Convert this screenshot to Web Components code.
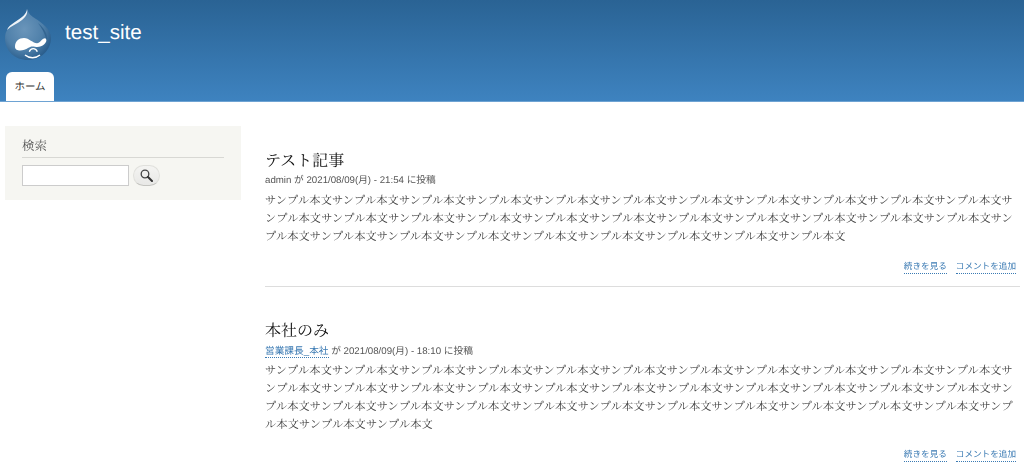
<!DOCTYPE html>
<html lang="ja">
<head>
<meta charset="utf-8">
<title>test_site</title>
<style>
  html, body { margin: 0; padding: 0; background: #fff; }
  body {
    font-family: "Liberation Serif", "Noto Serif CJK JP", "Noto Sans CJK JP", serif;
    color: #3b3b3b;
    overflow: hidden;
    height: 475px;
    text-rendering: geometricPrecision;
  }
  #content-row { display: flex; padding: 24px 4px 0 5px; gap: 24px; will-change: transform; }
  #main-col { flex: 1; min-width: 0; padding-top: 25px; }
</style>
</head>
<body>
<site-header name="test_site"><nav-tab>ホーム</nav-tab></site-header>
<div id="content-row">
  <search-block title-text="検索"></search-block>
  <div id="main-col">
    <article-teaser heading="テスト記事" author="admin" date="2021/08/09(月) - 21:54" repeat="31"></article-teaser>
    <article-teaser heading="本社のみ" author="営業課長_本社" author-link date="2021/08/09(月) - 18:10" repeat="36" last></article-teaser>
  </div>
</div>

<script>
const sansStack = `"Liberation Sans", "Noto Sans CJK JP", sans-serif`

const headerTemplate = document.createElement('template');
headerTemplate.innerHTML = `
  <style>
    :host {
      display: block;
      height: 102px;
      background: linear-gradient(#2a6394, #3e83c0);
      box-shadow: inset 0 -1px 0 #6ea3d3;
    }
    #branding {
      display: flex;
      align-items: flex-start;
      height: 72px;
      padding-left: 4px;
      box-sizing: border-box;
    }
    svg { width: 48px; height: 54px; margin-top: 8px; flex: none; }
    #name {
      font: 20.600px/1 ${sansStack};
      color: #fff;
      margin: 23px 0 0 13px;
    }
    #tabs { display: flex; padding-left: 6px; }
  </style>
  <div id="branding">
    <svg viewBox="0 0 48 54">
      <defs>
        <radialGradient id="drop" cx="0.42" cy="0.4" r="0.62">
          <stop offset="0" stop-color="#6a95ba"/>
          <stop offset="0.65" stop-color="#4f80aa"/>
          <stop offset="1" stop-color="#2b5f8e"/>
        </radialGradient>
      </defs>
      <path d="M23 1 C23 7 17 10 11 14 C5 18 1 23 1 30 C1 43 11 52 24 52 C37 52 47 42 47 30 C47 21 38 15 32 11 C27 8 24 5 23 1Z" fill="url(#drop)"/>
      <path d="M23 1 C23 6 17 10 11 14 C7 16.500 4 19 3 22 C7 18 13 16 18 12 C22 9 24 5 23 1Z" fill="#eef3f7"/>
      <path d="M34 15 C40 20 44 26 43 33 C41 26 38 20 34 15Z" fill="#336591"/>
      <path d="M11 38.700 C11 33 15 30 20 30 C25 30 29 35.300 33 35.300 C36 35.300 38 30.300 41 30.300 C43 31 43 34 40 36.500 C38 38.500 34 39.500 31 38.700 C28 38 26 38.500 24 40 C20 43 11 44 11 38.700Z" fill="#fff"/>
      <path d="M25.300 43.700 C26.500 39.500 32 39.500 33.300 43.700" fill="none" stroke="#fff" stroke-width="1.300"/>
      <path d="M21 47 C25 50.500 32 50.500 36 47" fill="none" stroke="#fff" stroke-width="1.500"/>
    </svg>
    <div id="name"></div>
  </div>
  <div id="tabs"><slot></slot></div>
`;

class SiteHeader extends HTMLElement {
  constructor() {
    super();
    this.attachShadow({ mode: 'open' });
    this.shadowRoot.appendChild(headerTemplate.content.cloneNode(true));
    this.shadowRoot.getElementById("name").textContent = this.getAttribute("name")
  }
}

const tabTemplate = document.createElement('template');
tabTemplate.innerHTML = `
  <style>
    :host {
      display: block;
      width: 48px;
      height: 29px;
      background: #fff;
      border-radius: 6px 6px 0 0;
      font: 10.500px/30px ${sansStack};
      color: #333;
      text-align: center;
    }
  </style>
  <slot></slot>
`;

class NavTab extends HTMLElement {
  constructor() {
    super();
    this.attachShadow({ mode: 'open' });
    this.shadowRoot.appendChild(tabTemplate.content.cloneNode(true));
  }
}

const searchTemplate = document.createElement('template');
searchTemplate.innerHTML = `
  <style>
    :host {
      display: block;
      flex: none;
      width: 236px;
      height: 74px;
      box-sizing: border-box;
      padding: 11px 17px 0;
      background: #f6f6f2;
    }
    h2 {
      margin: 0;
      height: 20px;
      font-weight: normal;
      font-size: 12.500px;
      line-height: 18px;
      color: #555;
      border-bottom: 1px solid #d8d8d4;
    }
    form { display: flex; align-items: center; gap: 4px; margin-top: 7px; }
    input {
      width: 107px;
      height: 21px;
      box-sizing: border-box;
      margin: 0;
      border: 1px solid #ccc;
      background: #fff;
      padding: 0;
    }
    button {
      width: 27px;
      height: 21px;
      margin: 0;
      padding: 0;
      border: 1px solid #e0e0dc;
      border-bottom-color: #c4c4c0;
      border-radius: 11px;
      background: linear-gradient(#f4f4f2, #e8e8e6);
      display: flex;
      align-items: center;
      justify-content: center;
    }
    svg { width: 13px; height: 13px; }
  </style>
  <h2></h2>
  <form>
    <input type="text">
    <button type="button" aria-label="検索">
      <svg viewBox="0 0 13 13">
        <circle cx="5" cy="5" r="3.800" fill="none" stroke="#444" stroke-width="1.300"/>
        <path d="M8 8 L12 12" stroke="#333" stroke-width="2" stroke-linecap="round"/>
      </svg>
    </button>
  </form>
`;

class SearchBlock extends HTMLElement {
  constructor() {
    super();
    this.attachShadow({ mode: 'open' });
    this.shadowRoot.appendChild(searchTemplate.content.cloneNode(true));
    this.shadowRoot.querySelector("h2").textContent = this.getAttribute("title-text")
  }
}

const articleTemplate = document.createElement('template');
articleTemplate.innerHTML = `
  <style>
    :host {
      display: block;
      padding-bottom: 12px;
      margin-bottom: 34px;
      border-bottom: 1px solid #ddd;
    }
    :host([last]) { border-bottom: none; margin-bottom: 0; }
    h2 {
      margin: 0;
      font-weight: normal;
      font-size: 16px;
      line-height: 22px;
      color: #111;
    }
    #meta {
      font: 9.700px/16px ${sansStack};
      color: #555;
    }
    #meta.has-link { padding-top: 1px; margin-bottom: -1px; }
    #author.link {
      color: #3a7ab3;
      border-bottom: 1px dotted #3a7ab3;
    }
    #body {
      font-size: 11.200px;
      letter-spacing: 0.140px;
      line-height: 18px;
      color: #3b3b3b;
      margin-top: 3px;
      word-break: break-all;
    }
    #links {
      display: flex;
      justify-content: flex-end;
      gap: 9px;
      margin-top: 13px;
      padding-right: 4px;
      font: 8.600px/14px ${sansStack};
    }
    #links a {
      color: #3a7ab3;
      text-decoration: none;
      border-bottom: 1px dotted #3a7ab3;
    }
  </style>
  <h2></h2>
  <div id="meta"><span id="author"></span> が <span id="date"></span> に投稿</div>
  <div id="body"></div>
  <div id="links"><a href="#">続きを見る</a><a href="#">コメントを追加</a></div>
`;

class ArticleTeaser extends HTMLElement {
  constructor() {
    super();
    this.attachShadow({ mode: 'open' });
    this.shadowRoot.appendChild(articleTemplate.content.cloneNode(true));

    let root = this.shadowRoot
    let hasLink = this.hasAttribute("author-link")
    root.querySelector("h2").textContent = this.getAttribute("heading")
    root.getElementById("author").textContent = this.getAttribute("author")
    root.getElementById("author").classList.toggle("link", hasLink)
    root.getElementById("meta").classList.toggle("has-link", hasLink)
    root.getElementById("date").textContent = this.getAttribute("date")
    root.getElementById("body").textContent = "サンプル本文".repeat(parseInt(this.getAttribute("repeat")))
  }
}

window.customElements.define("site-header", SiteHeader);
window.customElements.define("nav-tab", NavTab);
window.customElements.define("search-block", SearchBlock);
window.customElements.define("article-teaser", ArticleTeaser);
</script>
</body>
</html>
